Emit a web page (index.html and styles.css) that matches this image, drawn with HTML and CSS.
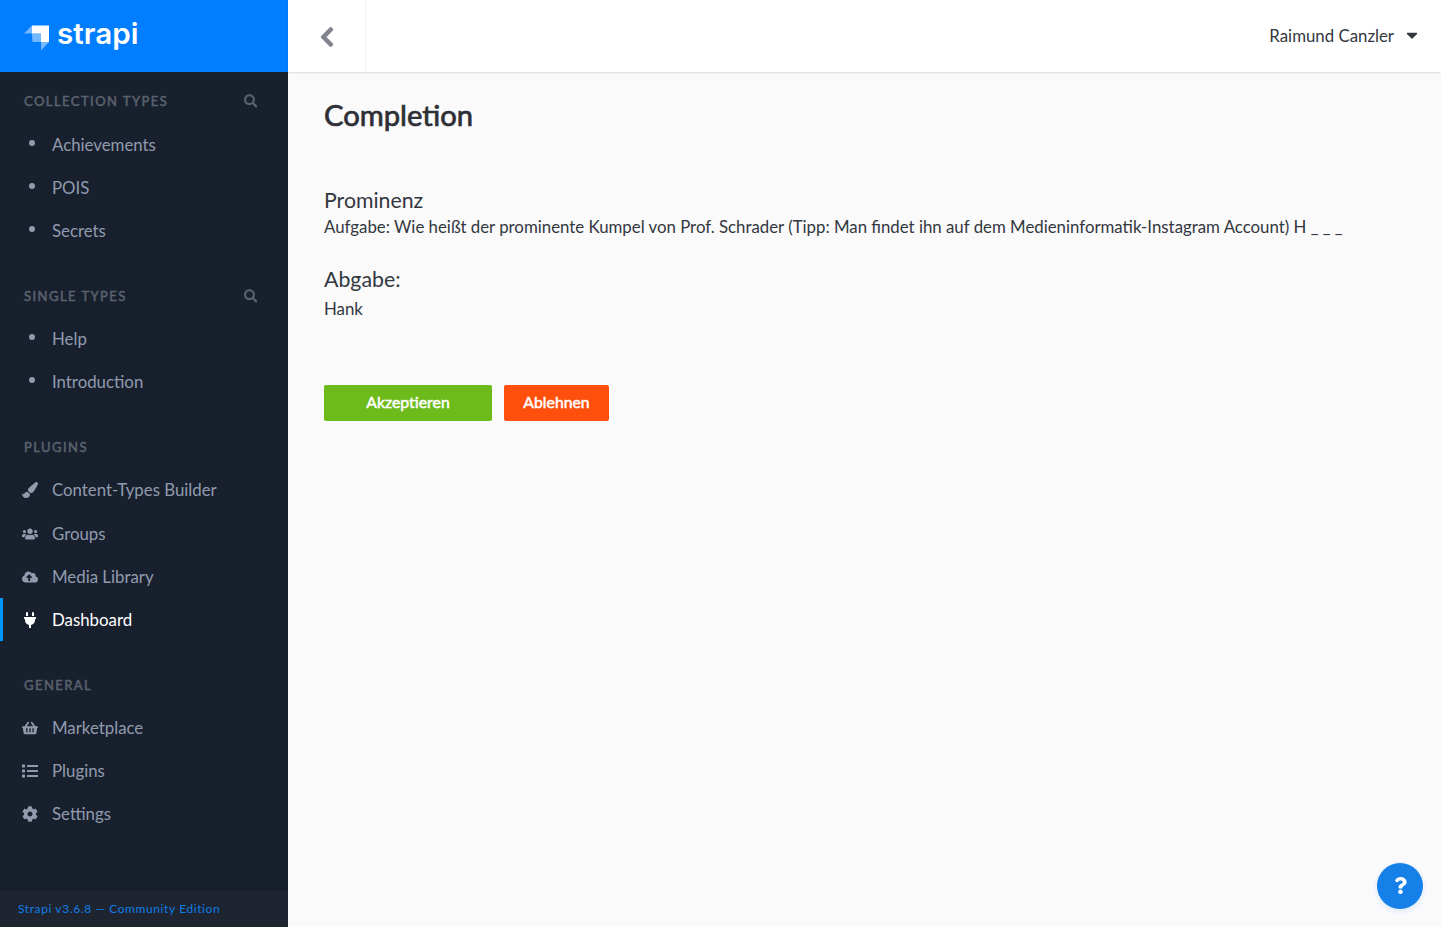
FILE: index.html
```html
<!DOCTYPE html>
<html lang="en">
<head>
    <meta charset="UTF-8">
    <title>Completion</title>
    <link rel="stylesheet" href="styles.css">
</head>
<body>
    <aside class="sidebar">
        <div class="brand">
            <svg class="brand-mark" viewBox="0 0 26 26">
                <path class="mark-light" d="M0 8.5 8 .5V8.5Z"/>
                <path class="mark-light" d="M8 8.5H17V17H8.5Z"/>
                <path class="mark-light" d="M17 17H25L17 25.5Z"/>
                <path class="mark-solid" d="M8 .5H25V17H17V8.5H8Z"/>
            </svg>
            <span class="brand-name">strapi</span>
        </div>
        <nav class="nav">
            <section class="nav-section">
                <div class="nav-head">
                    <span>Collection Types</span>
                    <svg class="nav-search" viewBox="0 0 512 512"><path d="M505 442.7L405.3 343c-4.5-4.5-10.6-7-17-7H372c27.6-35.3 44-79.7 44-128C416 93.1 322.9 0 208 0S0 93.1 0 208s93.1 208 208 208c48.3 0 92.7-16.4 128-44v16.3c0 6.4 2.5 12.5 7 17l99.7 99.7c9.4 9.4 24.6 9.4 33.9 0l28.3-28.3c9.4-9.4 9.4-24.6.1-34zM208 336c-70.7 0-128-57.2-128-128 0-70.7 57.2-128 128-128 70.7 0 128 57.2 128 128 0 70.7-57.2 128-128 128z"/></svg>
                </div>
                <a class="nav-item"><span class="nav-icon"><i class="dot"></i></span>Achievements</a>
                <a class="nav-item"><span class="nav-icon"><i class="dot"></i></span>POIS</a>
                <a class="nav-item"><span class="nav-icon"><i class="dot"></i></span>Secrets</a>
            </section>
            <section class="nav-section">
                <div class="nav-head">
                    <span>Single Types</span>
                    <svg class="nav-search" viewBox="0 0 512 512"><path d="M505 442.7L405.3 343c-4.5-4.5-10.6-7-17-7H372c27.6-35.3 44-79.7 44-128C416 93.1 322.9 0 208 0S0 93.1 0 208s93.1 208 208 208c48.3 0 92.7-16.4 128-44v16.3c0 6.4 2.5 12.5 7 17l99.7 99.7c9.4 9.4 24.6 9.4 33.9 0l28.3-28.3c9.4-9.4 9.4-24.6.1-34zM208 336c-70.7 0-128-57.2-128-128 0-70.7 57.2-128 128-128 70.7 0 128 57.2 128 128 0 70.7-57.2 128-128 128z"/></svg>
                </div>
                <a class="nav-item"><span class="nav-icon"><i class="dot"></i></span>Help</a>
                <a class="nav-item"><span class="nav-icon"><i class="dot"></i></span>Introduction</a>
            </section>
            <section class="nav-section">
                <div class="nav-head"><span>Plugins</span></div>
                <a class="nav-item nav-item-gap"><span class="nav-icon"><svg viewBox="0 0 512 512"><path d="M167.02 309.34c-40.12 2.58-76.53 17.86-97.19 72.3-2.35 6.21-8 9.98-14.59 9.98-11.11 0-45.46-27.67-55.25-34.35C0 439.62 37.93 512 128 512c75.86 0 128-43.77 128-120.19 0-3.11-.65-6.08-.97-9.13l-88.01-73.34zM457.89 0c-15.16 0-29.37 6.71-40.21 16.45C213.27 199.05 192 203.34 192 257.09c0 13.7 3.25 26.76 8.73 38.7l63.82 53.18c7.21 1.8 14.64 3.03 22.39 3.03 62.11 0 98.11-45.47 211.16-256.46 7.38-14.35 13.9-29.85 13.9-45.99C512 20.64 486 0 457.89 0z"/></svg></span>Content-Types Builder</a>
                <a class="nav-item"><span class="nav-icon"><svg viewBox="0 0 640 512"><path d="M96 224c35.3 0 64-28.7 64-64s-28.7-64-64-64-64 28.7-64 64 28.7 64 64 64zm448 0c35.3 0 64-28.7 64-64s-28.7-64-64-64-64 28.7-64 64 28.7 64 64 64zm32 32h-64c-17.6 0-33.5 7.1-45.1 18.6 40.3 22.1 68.9 62 75.1 109.4h66c17.7 0 32-14.3 32-32v-32c0-35.3-28.7-64-64-64zm-256 0c61.9 0 112-50.1 112-112S381.9 32 320 32 208 82.1 208 144s50.1 112 112 112zm76.8 32h-8.3c-20.8 10-43.9 16-68.5 16s-47.6-6-68.5-16h-8.3C179.6 288 128 339.6 128 403.2V432c0 26.5 21.5 48 48 48h288c26.5 0 48-21.5 48-48v-28.8c0-63.6-51.6-115.2-115.2-115.2zm-223.7-13.4C161.5 263.1 145.6 256 128 256H64c-35.3 0-64 28.7-64 64v32c0 17.7 14.3 32 32 32h65.9c6.3-47.4 34.9-87.3 75.2-109.4z"/></svg></span>Groups</a>
                <a class="nav-item"><span class="nav-icon"><svg viewBox="0 0 640 512"><path d="M537.6 226.6c4.1-10.7 6.4-22.4 6.4-34.6 0-53-43-96-96-96-19.7 0-38.1 6-53.3 16.2C367 64.2 315.3 32 256 32c-88.4 0-160 71.6-160 160 0 2.7.1 5.4.2 8.1C40.2 219.8 0 273.2 0 336c0 79.5 64.5 144 144 144h368c70.7 0 128-57.3 128-128 0-61.9-44-113.6-102.4-125.4zM393.4 288H328v112c0 8.8-7.2 16-16 16h-48c-8.8 0-16-7.2-16-16V288h-65.4c-14.3 0-21.4-17.2-11.3-27.3l105.4-105.4c6.2-6.2 16.4-6.2 22.6 0l105.4 105.4c10.1 10.1 2.9 27.3-11.3 27.3z"/></svg></span>Media Library</a>
                <a class="nav-item active"><span class="nav-icon"><svg class="icon-plug" viewBox="0 0 384 512"><path d="M320,32a32,32,0,0,0-64,0v96h64Zm48,128H16A16,16,0,0,0,0,176v32a16,16,0,0,0,16,16H32v32A160.07,160.07,0,0,0,160,412.8V512h64V412.8A160.07,160.07,0,0,0,352,256V224h16a16,16,0,0,0,16-16V176A16,16,0,0,0,368,160ZM128,32a32,32,0,0,0-64,0v96h64Z"/></svg></span>Dashboard</a>
            </section>
            <section class="nav-section">
                <div class="nav-head"><span>General</span></div>
                <a class="nav-item"><span class="nav-icon"><svg viewBox="0 0 576 512"><path d="M576 216v16c0 13.255-10.745 24-24 24h-8l-26.113 182.788C514.509 462.435 494.257 480 470.37 480H105.63c-23.887 0-44.139-17.565-47.518-41.212L32 256h-8c-13.255 0-24-10.745-24-24v-16c0-13.255 10.745-24 24-24h67.341l106.78-146.821c10.395-14.292 30.407-17.453 44.701-7.058 14.293 10.395 17.453 30.408 7.058 44.701L170.477 192h235.046L326.12 82.821c-10.395-14.292-7.234-34.306 7.059-44.701 14.291-10.395 34.306-7.235 44.701 7.058L484.659 192H552c13.255 0 24 10.745 24 24zM312 392V280c0-13.255-10.745-24-24-24s-24 10.745-24 24v112c0 13.255 10.745 24 24 24s24-10.745 24-24zm112 0V280c0-13.255-10.745-24-24-24s-24 10.745-24 24v112c0 13.255 10.745 24 24 24s24-10.745 24-24zm-224 0V280c0-13.255-10.745-24-24-24s-24 10.745-24 24v112c0 13.255 10.745 24 24 24s24-10.745 24-24z"/></svg></span>Marketplace</a>
                <a class="nav-item"><span class="nav-icon"><svg viewBox="0 0 512 512"><path d="M80 368H16a16 16 0 0 0-16 16v64a16 16 0 0 0 16 16h64a16 16 0 0 0 16-16v-64a16 16 0 0 0-16-16zm0-320H16A16 16 0 0 0 0 64v64a16 16 0 0 0 16 16h64a16 16 0 0 0 16-16V64a16 16 0 0 0-16-16zm0 160H16a16 16 0 0 0-16 16v64a16 16 0 0 0 16 16h64a16 16 0 0 0 16-16v-64a16 16 0 0 0-16-16zm416 176H176a16 16 0 0 0-16 16v32a16 16 0 0 0 16 16h320a16 16 0 0 0 16-16v-32a16 16 0 0 0-16-16zm0-320H176a16 16 0 0 0-16 16v32a16 16 0 0 0 16 16h320a16 16 0 0 0 16-16V80a16 16 0 0 0-16-16zm0 160H176a16 16 0 0 0-16 16v32a16 16 0 0 0 16 16h320a16 16 0 0 0 16-16v-32a16 16 0 0 0-16-16z"/></svg></span>Plugins</a>
                <a class="nav-item"><span class="nav-icon"><svg viewBox="0 0 512 512"><path d="M487.4 315.7l-42.6-24.6c4.3-23.2 4.3-47 0-70.2l42.6-24.6c4.9-2.8 7.1-8.6 5.5-14-11.1-35.6-30-67.8-54.7-94.6-3.8-4.1-10-5.1-14.8-2.3L380.8 110c-17.9-15.4-38.5-27.3-60.8-35.1V25.8c0-5.6-3.9-10.5-9.4-11.7-36.7-8.2-74.3-7.8-109.2 0-5.5 1.2-9.4 6.1-9.4 11.7V75c-22.2 7.9-42.8 19.8-60.8 35.1L88.7 85.5c-4.9-2.8-11-1.9-14.8 2.3-24.7 26.7-43.6 58.9-54.7 94.6-1.7 5.4.6 11.2 5.5 14L67.3 221c-4.3 23.2-4.3 47 0 70.2l-42.6 24.6c-4.9 2.8-7.1 8.6-5.5 14 11.1 35.6 30 67.8 54.7 94.6 3.8 4.1 10 5.1 14.8 2.3l42.6-24.6c17.9 15.4 38.5 27.3 60.8 35.1v49.2c0 5.6 3.9 10.5 9.4 11.7 36.7 8.2 74.3 7.8 109.2 0 5.5-1.2 9.4-6.1 9.4-11.7v-49.2c22.2-7.9 42.8-19.8 60.8-35.1l42.6 24.6c4.9 2.8 11 1.9 14.8-2.3 24.7-26.7 43.6-58.9 54.7-94.6 1.5-5.5-.7-11.3-5.6-14.1zM256 336c-44.1 0-80-35.9-80-80s35.9-80 80-80 80 35.9 80 80-35.9 80-80 80z"/></svg></span>Settings</a>
            </section>
        </nav>
        <footer class="sidebar-footer">Strapi v3.6.8 — Community Edition</footer>
    </aside>

    <div class="page">
        <header class="topbar">
            <button class="back-btn">
                <svg viewBox="0 0 320 512"><path d="M34.52 239.03L228.87 44.69c9.37-9.37 24.57-9.37 33.94 0l22.67 22.67c9.36 9.36 9.38 24.54.04 33.92L131.49 256l154.02 154.75c9.34 9.38 9.32 24.56-.04 33.92l-22.67 22.67c-9.37 9.37-24.57 9.37-33.94 0L34.52 272.97c-9.37-9.37-9.37-24.57 0-33.94z"/></svg>
            </button>
            <div class="user-menu">
                <span>Raimund Canzler</span>
                <svg viewBox="0 0 320 512"><path d="M31.3 192h257.3c17.8 0 26.7 21.5 14.1 34.1L174.1 354.8c-7.8 7.8-20.5 7.8-28.3 0L17.2 226.1C4.6 213.5 13.5 192 31.3 192z"/></svg>
            </div>
        </header>
        <main class="content">
            <h1>Completion</h1>
            <h2 class="task-title">Prominenz</h2>
            <p class="task-text">Aufgabe: Wie heißt der prominente Kumpel von Prof. Schrader (Tipp: Man findet ihn auf dem Medieninformatik-Instagram Account) H _ _ _</p>
            <h2 class="answer-title">Abgabe:</h2>
            <p class="answer-text">Hank</p>
            <div class="actions">
                <button class="btn btn-accept">Akzeptieren</button>
                <button class="btn btn-reject">Ablehnen</button>
            </div>
        </main>
    </div>

    <button class="help-btn">
        <svg viewBox="0 0 384 512"><path d="M202.021 0C122.202 0 70.503 32.703 29.914 91.026c-7.363 10.58-5.093 25.086 5.178 32.874l43.138 32.709c10.373 7.865 25.132 6.026 33.253-4.148 25.049-31.381 43.63-49.449 82.757-49.449 30.764 0 68.816 19.799 68.816 49.631 0 22.552-18.617 34.134-48.993 51.164-35.423 19.86-82.299 44.576-82.299 106.405V320c0 13.255 10.745 24 24 24h72.471c13.255 0 24-10.745 24-24v-5.773c0-42.86 125.268-44.645 125.268-160.627C377.504 66.256 286.902 0 202.021 0zM192 373.459c-38.196 0-69.271 31.075-69.271 69.271 0 38.195 31.075 69.27 69.271 69.27s69.271-31.075 69.271-69.271-31.075-69.27-69.271-69.27z"/></svg>
    </button>
</body>
</html>
```

FILE: styles.css
```css
* {
    box-sizing: border-box;
}
html, body {
    height: 100%;
}
body {
    margin: 0;
    display: flex;
    height: 927px;
    overflow: hidden;
    font-family: Lato, "Noto Sans", sans-serif;
    font-size: 16.82px;
    background-color: #fafafb;
    color: #333740;
}
.sidebar {
    width: 288px;
    flex-shrink: 0;
    display: flex;
    flex-direction: column;
    background-color: #18202e;
}
.brand {
    height: 72px;
    flex-shrink: 0;
    display: flex;
    align-items: center;
    padding-left: 24px;
    background-color: #007eff;
}
.brand-mark {
    width: 26px;
    height: 26px;
    margin-top: 4px;
}
.mark-solid {
    fill: #fff;
}
.mark-light {
    fill: #fff;
    opacity: 0.45;
}
.brand-name {
    margin: -6px 0 0 7px;
    font-family: Inter, sans-serif;
    font-size: 29.6px;
    font-weight: 600;
    color: #fff;
}
.nav {
    flex: 1;
    padding-top: 19px;
}
.nav-section {
    margin-bottom: 34px;
}
.nav-head {
    height: 20px;
    margin-bottom: 11px;
    padding: 0 31px 0 24px;
    display: flex;
    align-items: center;
    justify-content: space-between;
    font-size: 13px;
    letter-spacing: 1.45px;
    text-transform: uppercase;
    color: #5b626f;
    -webkit-text-stroke: 0.5px #5b626f;
}
.nav-section:first-child .nav-head {
    margin-bottom: 12px;
}
.nav-search {
    width: 13.5px;
    height: 14px;
    fill: #5b626f;
}
.nav-item {
    height: 43px;
    display: flex;
    align-items: center;
    color: #919bae;
    border-left: 3px solid transparent;
}
.nav-item-gap {
    margin-bottom: 1px;
}
.nav-item.active {
    color: #fff;
    border-left-color: #0097f7;
}
.nav-icon {
    width: 49px;
    padding-left: 19px;
    flex-shrink: 0;
    display: flex;
    align-items: center;
}
.nav-icon svg {
    width: 16px;
    height: 16px;
    fill: #919bae;
}
.nav-icon .icon-plug {
    fill: #fff;
}
.dot {
    width: 6px;
    height: 6px;
    margin: -4px 0 0 7px;
    border-radius: 50%;
    background-color: #919bae;
}
.sidebar-footer {
    height: 36px;
    flex-shrink: 0;
    padding: 0 0 2px 18px;
    display: flex;
    align-items: center;
    font-size: 12px;
    letter-spacing: 0.6px;
    color: #0e7de8;
    background-color: #1e2531;
}
.page {
    flex: 1;
    display: flex;
    flex-direction: column;
}
.topbar {
    height: 72px;
    flex-shrink: 0;
    display: flex;
    align-items: center;
    justify-content: space-between;
    background-color: #fff;
    box-shadow: 0 1px 2px rgba(0, 0, 0, 0.12);
}
.back-btn {
    width: 78px;
    height: 72px;
    padding: 4px 0 0;
    background: none;
    border: none;
    border-right: 1px solid #f3f3f4;
}
.back-btn svg {
    width: 14px;
    height: 22px;
    fill: #81848d;
    stroke: #81848d;
    stroke-width: 24;
}
.user-menu {
    display: flex;
    align-items: center;
    gap: 12px;
    padding: 0 23px 2px 0;
}
.user-menu svg {
    width: 12px;
    height: 18px;
    fill: #333740;
}
.content {
    padding: 23px 36px;
}
h1 {
    margin: 0;
    font-size: 29.2px;
    line-height: 40px;
    font-weight: 400;
    color: #2d2f35;
    -webkit-text-stroke: 0.7px #2d2f35;
}
.task-title, .answer-title {
    margin: 0;
    font-size: 21.3px;
    line-height: 28px;
    font-weight: 400;
}
.task-title {
    margin-top: 51px;
}
.task-text, .answer-text {
    margin: 0;
    line-height: 24px;
}
.task-text {
    margin-top: 1px;
}
.answer-title {
    margin-top: 26px;
}
.answer-text {
    margin-top: 4px;
}
.actions {
    display: flex;
    gap: 12px;
    margin-top: 64px;
}
.btn {
    height: 36px;
    padding: 0 0 4px;
    border: none;
    border-radius: 2px;
    font-family: inherit;
    font-size: 15.8px;
    font-weight: 400;
    color: #fff;
    -webkit-text-stroke: 0.5px #fff;
}
.btn-accept {
    width: 168px;
    background-color: #6dbb1a;
}
.btn-reject {
    width: 105px;
    background-color: #fe500c;
}
.help-btn {
    position: absolute;
    right: 18px;
    bottom: 18px;
    width: 46px;
    height: 46px;
    padding: 0 0 2px;
    display: flex;
    align-items: center;
    justify-content: center;
    border: none;
    border-radius: 50%;
    background-color: #1480e8;
    box-shadow: 0 2px 6px rgba(20, 128, 232, 0.15);
}
.help-btn svg {
    width: 13px;
    height: 17px;
    fill: #fff;
}
```
